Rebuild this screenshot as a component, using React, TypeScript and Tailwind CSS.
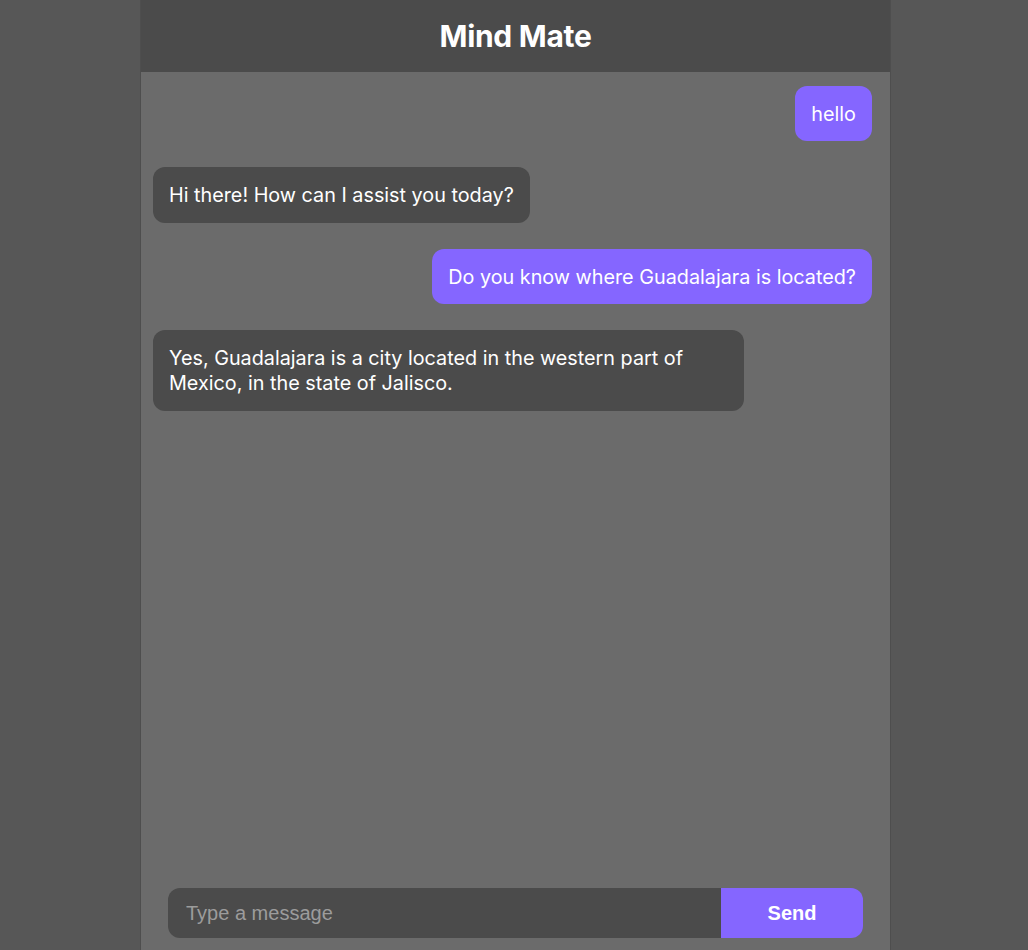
import React, { useState } from 'react';

type Msg = { id: number; from: 'user' | 'bot'; text: string };

const MESSAGES: Msg[] = [
  { id: 1, from: 'user', text: 'hello' },
  { id: 2, from: 'bot', text: 'Hi there! How can I assist you today?' },
  { id: 3, from: 'user', text: 'Do you know where Guadalajara is located?' },
  {
    id: 4,
    from: 'bot',
    text: 'Yes, Guadalajara is a city located in the western part of Mexico, in the state of Jalisco.',
  },
];

export default function App() {
  const [draft, setDraft] = useState('');

  return (
    <div className="min-h-screen bg-[#575757] flex justify-center pl-[3px] font-['Inter',sans-serif]">
      <div className="w-[751px] h-screen flex flex-col bg-[#6b6b6b] border-x border-[#4e4e4e]">
        {/* Header */}
        <div className="h-[72px] shrink-0 bg-[#4b4b4b] flex items-center justify-center">
          <h1 className="text-[30px] font-bold text-white tracking-[-0.3px]">Mind Mate</h1>
        </div>

        {/* Messages */}
        <div className="flex-1 overflow-y-auto pl-3 pr-[18px] pt-[14px] flex flex-col gap-[26px]">
          {MESSAGES.map(m => (
            <div key={m.id} className={`flex ${m.from === 'user' ? 'justify-end' : 'justify-start'}`}>
              <div
                className={`max-w-[591px] rounded-[12px] px-[16px] pt-[16px] pb-[14.4px] text-[19.8px] leading-[25px] text-white ${
                  m.from === 'user' ? 'bg-[#8566ff]' : 'bg-[#4b4b4b]'
                }`}
              >
                {m.text}
              </div>
            </div>
          ))}
        </div>

        {/* Composer */}
        <div className="shrink-0 px-[27px] pb-3 pt-3 flex">
          <input
            value={draft}
            onChange={e => setDraft(e.target.value)}
            placeholder="Type a message"
            className="flex-1 h-[50px] rounded-l-xl bg-[#4b4b4b] pl-[18px] text-[20px] text-white placeholder:text-[#9c9c9c] outline-none font-['Liberation_Sans',Arial,sans-serif]"
          />
          <button className="w-[142px] h-[50px] rounded-r-xl bg-[#8566ff] text-white text-[20px] font-bold font-['Liberation_Sans',Arial,sans-serif]">
            Send
          </button>
        </div>
      </div>
    </div>
  );
}
